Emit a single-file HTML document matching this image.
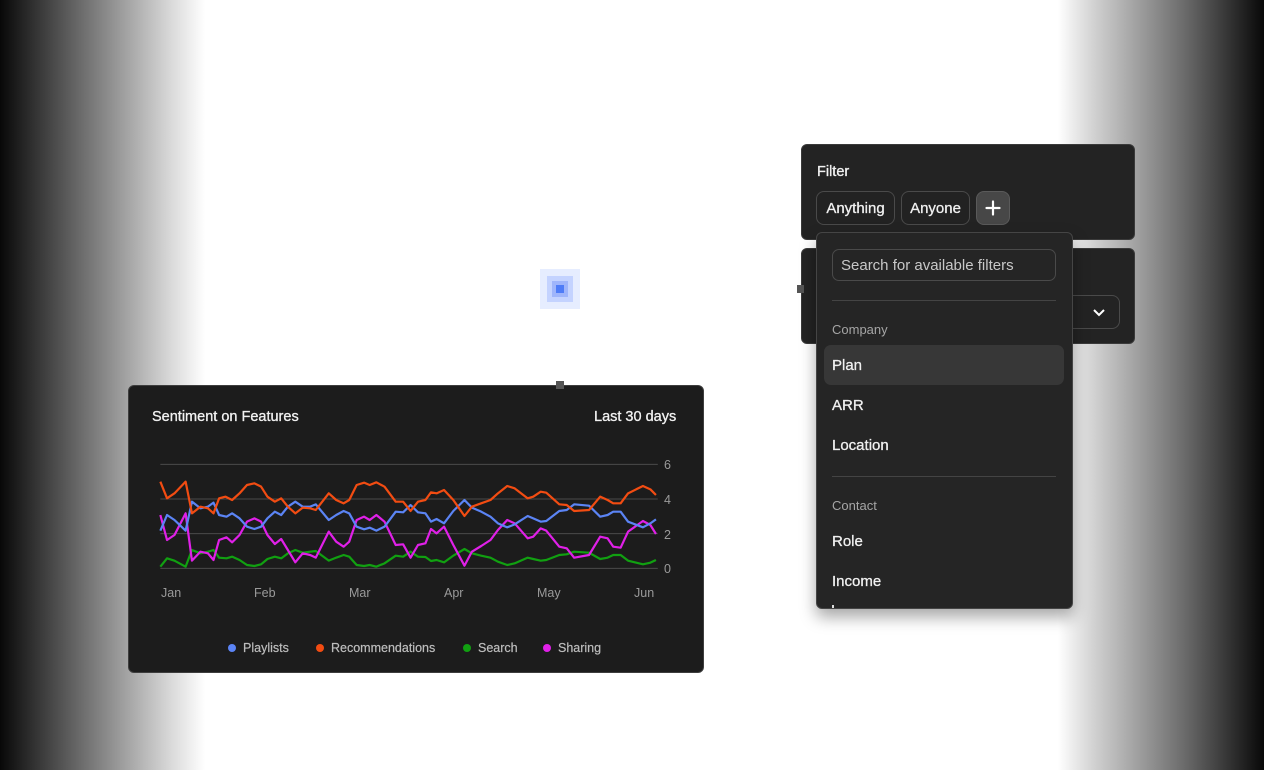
<!DOCTYPE html>
<html><head><meta charset="utf-8"><style>
*{margin:0;padding:0;box-sizing:border-box}
body{width:1264px;height:770px;overflow:hidden;position:relative;font-family:"Liberation Sans",sans-serif;
background:linear-gradient(to right,#080808 0px,#6a6a6a 80px,#d8d8d8 170px,#fff 205px,#fff 1058px,#d0d0d0 1095px,#6a6a6a 1185px,#080808 1264px);}
.abs{position:absolute}
.card{position:absolute;left:128px;top:385px;width:576px;height:288px;background:#1c1c1c;border:1px solid #3e3e3e;border-radius:6px}
.t{position:absolute;color:#f2f2f2;font-size:14.5px;-webkit-text-stroke:0.3px #f2f2f2}
.ax{position:absolute;color:#9a9a9a;font-size:12.5px}
.lg{position:absolute;top:641px;color:#bdbdbd;font-size:12.5px;-webkit-text-stroke:0.2px #bdbdbd}
.dot{display:inline-block;width:8px;height:8px;border-radius:50%;margin-right:7px;vertical-align:0px}
.panel{position:absolute;left:801px;width:334px;height:96px;background:#232323;border:1px solid #3a3a3a;border-radius:6px}
.chip{position:absolute;top:191px;height:34px;border:1px solid #4a4a4a;border-radius:8px;color:#f0f0f0;font-size:15px;line-height:34px;text-align:center;background:#222;-webkit-text-stroke:0.3px #f0f0f0}
.dd{position:absolute;left:816px;top:232px;width:257px;height:377px;background:#252525;border:1px solid #454545;border-radius:6px;box-shadow:0 8px 16px rgba(0,0,0,.35);overflow:hidden}
.it{position:absolute;left:15px;color:#f0f0f0;font-size:15px;-webkit-text-stroke:0.3px #f0f0f0}
.gh{position:absolute;left:15px;color:#a5a5a5;font-size:13px}
.hr{position:absolute;left:15px;width:224px;height:1px;background:#444}
</style></head><body>
<div class="abs" style="left:540px;top:269px;width:40px;height:40px;background:#e6edff"></div>
<div class="abs" style="left:547px;top:276px;width:26px;height:26px;background:#c4d3ff"></div>
<div class="abs" style="left:552px;top:281px;width:16px;height:16px;background:#9fb5fb"></div>
<div class="abs" style="left:556px;top:285px;width:8px;height:8px;background:#4f7cf7"></div>

<div class="card"></div>
<div class="t" style="left:152px;top:409px">Sentiment on Features</div>
<div class="t" style="left:594px;top:409px">Last 30 days</div>
<div class="abs" style="left:556px;top:381px;width:8px;height:8px;background:#555"></div>
<svg class="abs" style="left:128px;top:385px" width="580" height="290" viewBox="0 0 1560 870" preserveAspectRatio="none">
<g stroke="#4a4a4a" stroke-width="1">
<line x1="87" y1="238" x2="1425" y2="238" vector-effect="non-scaling-stroke"/>
<line x1="87" y1="342" x2="1425" y2="342" vector-effect="non-scaling-stroke"/>
<line x1="87" y1="446" x2="1425" y2="446" vector-effect="non-scaling-stroke"/>
<line x1="87" y1="550" x2="1425" y2="550" vector-effect="non-scaling-stroke"/>
</g>
<g fill="none" stroke-width="2.2" stroke-linejoin="round">
<polyline vector-effect="non-scaling-stroke" stroke="#11a011" points="87,545 105,520 125,527 155,545 172,495 195,505 215,500 230,495 245,518 265,520 280,515 300,525 320,540 340,543 358,538 375,522 395,515 412,520 430,505 450,495 470,503 490,500 505,498 540,527 560,518 580,510 595,515 615,540 635,543 650,540 668,545 690,535 720,512 740,515 760,500 780,515 800,516 815,528 830,525 850,532 875,512 905,492 925,505 950,512 975,518 995,530 1020,540 1040,535 1075,518 1090,522 1110,527 1125,525 1160,510 1180,508 1200,500 1240,503 1270,522 1290,518 1305,510 1325,510 1345,527 1385,538 1405,533 1420,525"/>
<polyline vector-effect="non-scaling-stroke" stroke="#e020e8" points="87,390 105,465 125,450 155,385 172,527 195,500 215,505 230,525 245,465 265,457 280,472 300,450 320,410 340,400 358,410 375,450 395,477 412,462 430,495 450,532 470,505 490,510 505,518 540,440 560,470 580,485 595,470 615,405 635,395 650,405 668,390 690,410 720,480 740,478 760,518 780,480 800,475 815,432 830,445 850,425 875,480 905,542 925,500 950,483 975,465 995,435 1020,405 1040,415 1075,460 1090,455 1110,430 1125,437 1160,485 1180,490 1200,518 1240,510 1270,455 1290,460 1305,485 1325,488 1345,440 1385,408 1405,420 1420,447"/>
<polyline vector-effect="non-scaling-stroke" stroke="#5b84f5" points="87,437 105,390 125,405 155,437 172,350 195,370 215,365 230,353 245,390 265,395 280,385 300,400 320,425 340,432 358,425 375,400 395,380 412,390 430,365 450,350 470,365 490,365 505,358 540,405 560,390 580,378 595,385 615,425 635,433 650,428 668,437 690,425 720,380 740,382 760,360 780,382 800,385 815,410 830,402 850,415 875,378 905,345 925,368 950,380 975,395 995,415 1020,427 1040,418 1075,393 1090,400 1110,410 1125,408 1160,378 1180,375 1200,358 1240,362 1270,395 1290,390 1305,380 1325,380 1345,410 1385,427 1405,415 1420,403"/>
<polyline vector-effect="non-scaling-stroke" stroke="#f24c12" points="87,290 105,340 125,325 155,290 172,385 195,365 215,370 230,385 245,340 262,335 280,345 300,325 320,300 340,295 358,305 375,335 395,350 412,340 430,365 450,385 470,368 490,370 505,375 540,325 560,345 580,355 595,345 615,300 635,293 650,300 668,292 690,305 720,350 740,350 760,378 780,350 800,345 815,322 830,325 850,315 875,345 905,393 925,365 950,355 975,345 995,325 1020,303 1040,310 1075,340 1090,335 1110,320 1125,323 1160,358 1180,360 1200,378 1240,375 1270,335 1290,345 1305,355 1325,355 1345,325 1385,303 1405,313 1420,330"/>
</g></svg>
<div class="ax" style="left:664px;top:458px">6</div>
<div class="ax" style="left:664px;top:493px">4</div>
<div class="ax" style="left:664px;top:528px">2</div>
<div class="ax" style="left:664px;top:562px">0</div>
<div class="ax" style="left:161px;top:586px">Jan</div>
<div class="ax" style="left:254px;top:586px">Feb</div>
<div class="ax" style="left:349px;top:586px">Mar</div>
<div class="ax" style="left:444px;top:586px">Apr</div>
<div class="ax" style="left:537px;top:586px">May</div>
<div class="ax" style="left:634px;top:586px">Jun</div>
<div class="lg" style="left:228px"><span class="dot" style="background:#5b84f5"></span>Playlists</div>
<div class="lg" style="left:316px"><span class="dot" style="background:#f24c12"></span>Recommendations</div>
<div class="lg" style="left:463px"><span class="dot" style="background:#11a011"></span>Search</div>
<div class="lg" style="left:543px"><span class="dot" style="background:#e020e8"></span>Sharing</div>

<div class="panel" style="top:248px"></div>
<div class="abs" style="left:1060px;top:295px;width:60px;height:34px;border:1px solid #4a4a4a;border-radius:8px"></div>
<svg class="abs" style="left:1092px;top:306px" width="14" height="12"><path d="M2 4 L7 9 L12 4" stroke="#fff" stroke-width="2" fill="none"/></svg>
<div class="abs" style="left:797px;top:285px;width:7px;height:8px;background:#555"></div>
<div class="panel" style="top:144px"></div>
<div class="t" style="left:817px;top:164px;font-size:14.5px">Filter</div>
<div class="chip" style="left:816px;width:79px">Anything</div>
<div class="chip" style="left:901px;width:69px">Anyone</div>
<div class="chip" style="left:976px;width:34px;background:#474747;border-color:#5a5a5a"></div>
<svg class="abs" style="left:985px;top:200px" width="16" height="16"><path d="M8 1.5V14.5M1.5 8H14.5" stroke="#fff" stroke-width="2.2" stroke-linecap="round"/></svg>

<div class="dd">
<div class="abs" style="left:15px;top:16px;width:224px;height:32px;border:1px solid #4a4a4a;border-radius:7px;color:#c8c8c8;font-size:15px;line-height:32px;padding-left:8px">Search for available filters</div>
<div class="hr" style="top:67px"></div>
<div class="gh" style="top:89px">Company</div>
<div class="abs" style="left:7px;top:112px;width:240px;height:40px;background:#373737;border-radius:7px"></div>
<div class="it" style="top:124px">Plan</div>
<div class="it" style="top:164px">ARR</div>
<div class="it" style="top:204px">Location</div>
<div class="hr" style="top:243px"></div>
<div class="gh" style="top:265px">Contact</div>
<div class="it" style="top:300px">Role</div>
<div class="it" style="top:340px">Income</div>
<div class="it" style="top:372px;height:4px;width:2px;background:#ddd"></div>
</div>
</body></html>
